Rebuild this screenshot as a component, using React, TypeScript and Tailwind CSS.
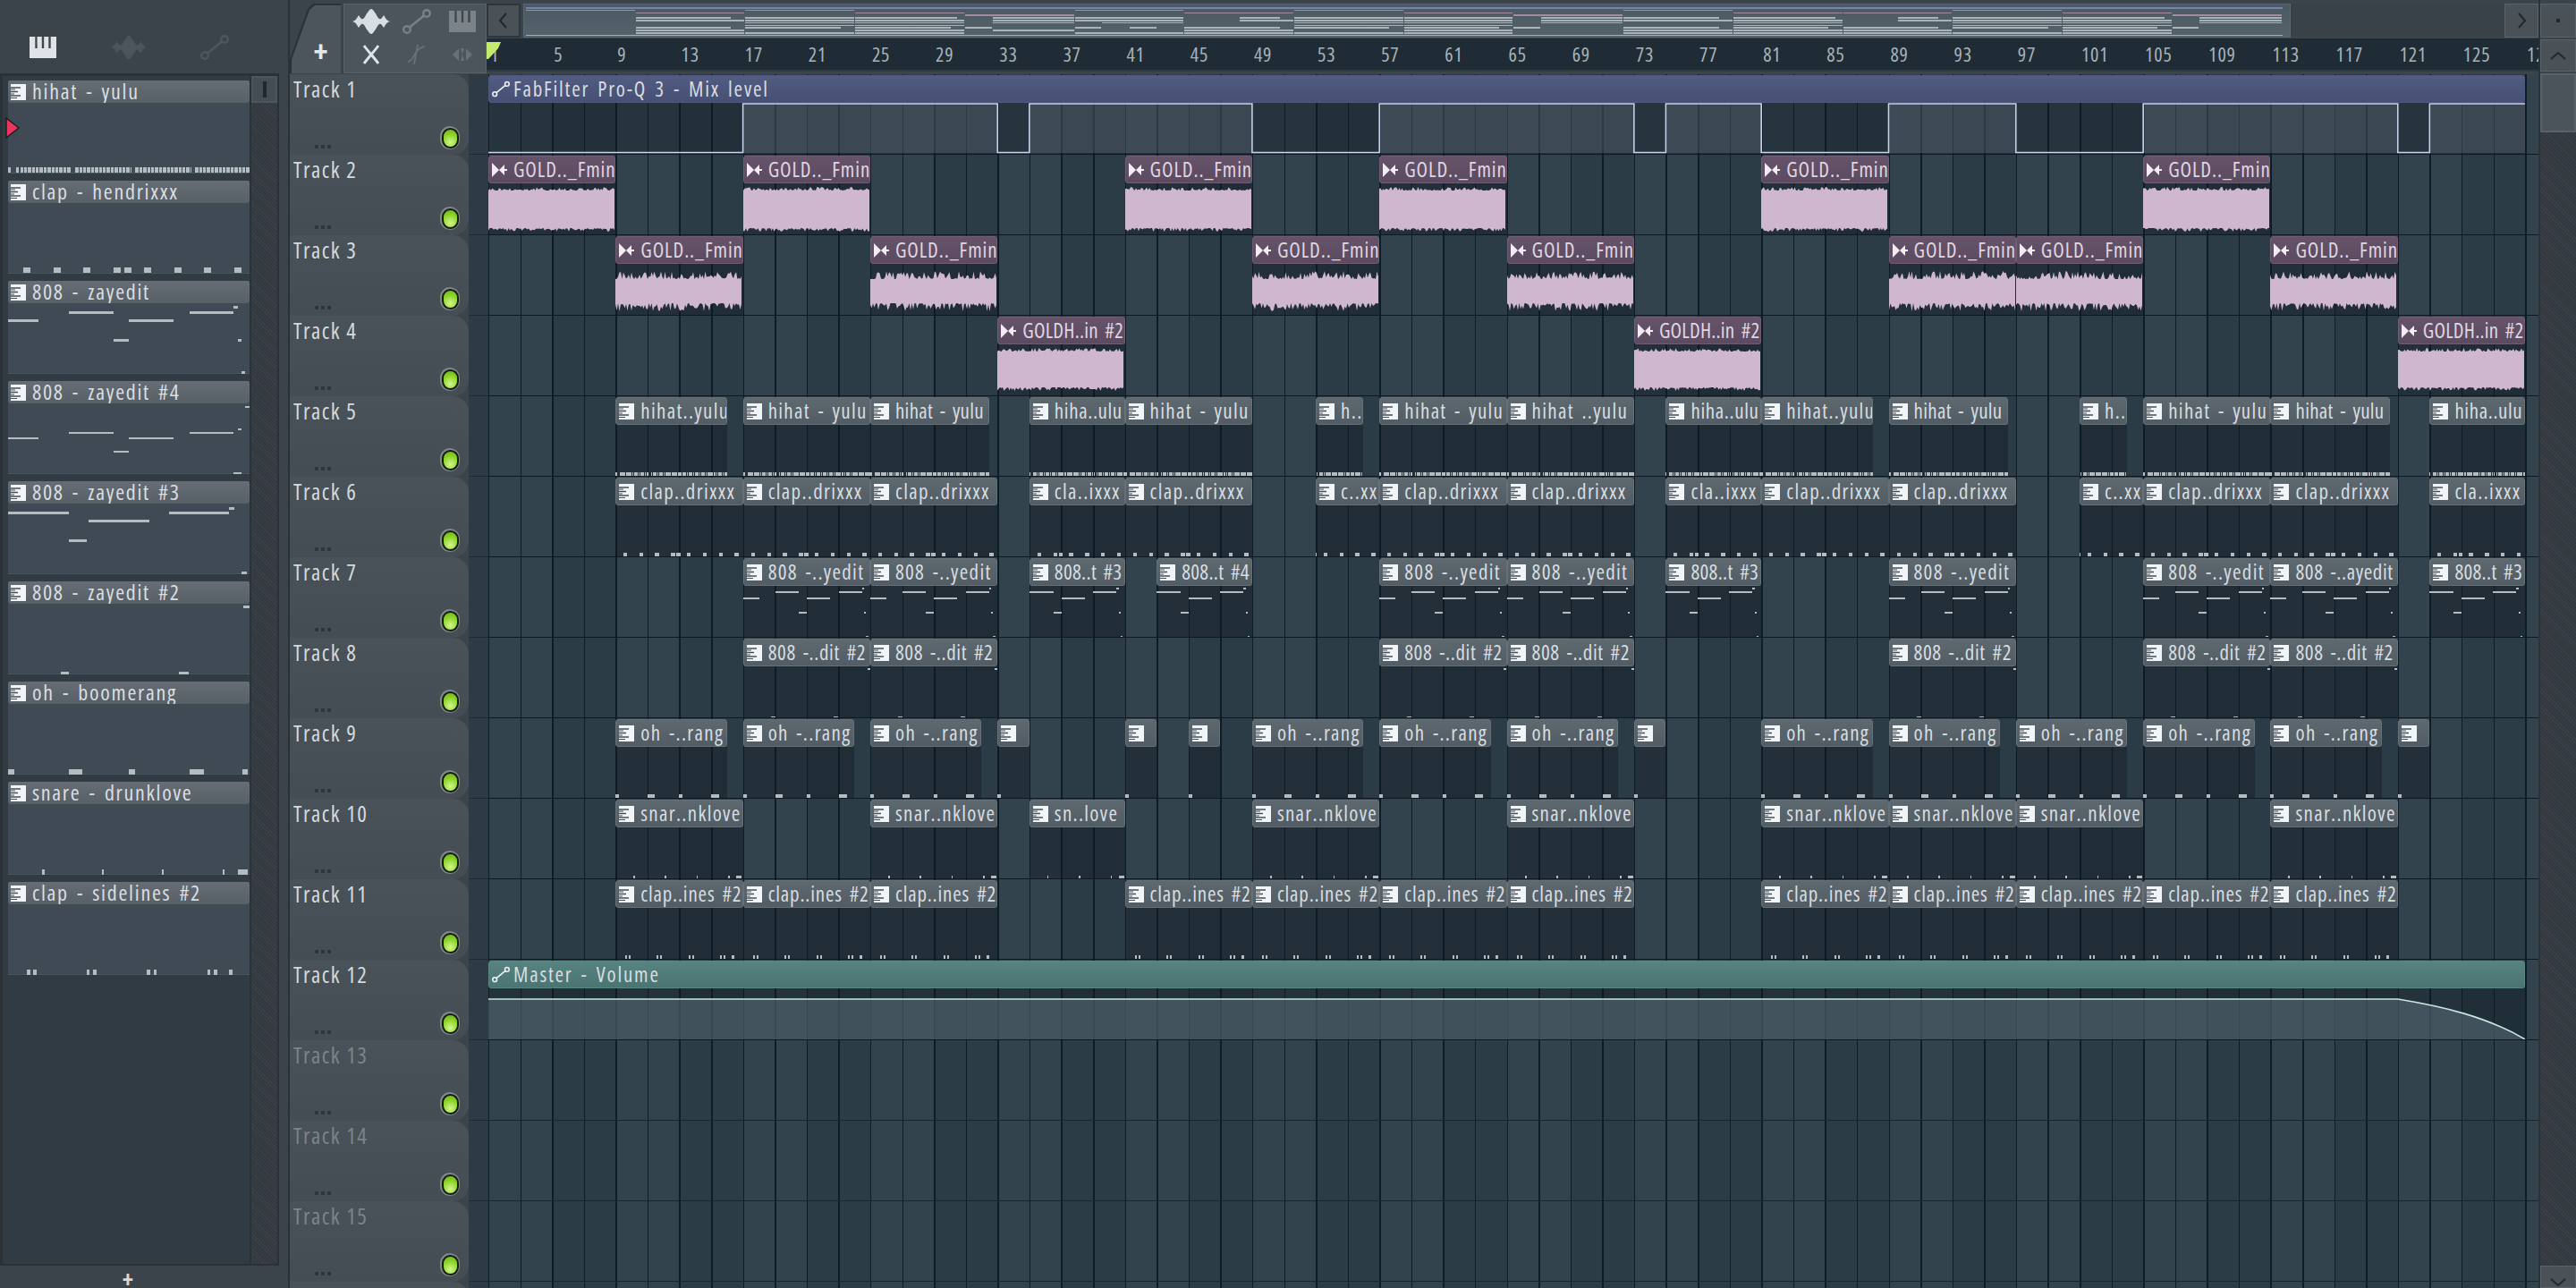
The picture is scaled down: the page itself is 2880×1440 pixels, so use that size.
import React from "react";

const BAR = 17.79;
const bx = (b: number) => (b - 1) * BAR;

type Note = [number, number, number, number];
const ticks = (segs: number[][], y: number, h: number): Note[] => {
  const out: Note[] = [];
  segs.forEach(([a, b]) => {
    for (let x = a; x < b; x += 0.13) out.push([x, Math.min(x + 0.1, b), y, h]);
  });
  return out;
};
const PAT: Record<string, Note[]> = {
  hihat: ticks([[0, 0.1], [0.27, 2.08], [2.23, 4.1], [4.22, 6.07], [6.2, 8]], 0.915, 6),
  clapH: [0.5, 1.5, 2.5, 3.5, 3.84, 4.5, 5.5, 6.5, 7.5].map((x) => [x, x + 0.24, 0.915, 6] as Note),
  z1: [[2, 3.5, 0.11, 3], [6, 7.47, 0.11, 3], [0, 1, 0.23, 3], [4, 5.48, 0.23, 3], [3.5, 4, 0.5, 3], [7.6, 7.72, 0.5, 3], [7.47, 7.6, 0.04, 3], [7.72, 7.85, 0.96, 3]],
  z4: [[2, 3.5, 0.4, 2], [6, 7.47, 0.4, 2], [0, 1, 0.48, 2], [4, 5.48, 0.48, 2], [3.5, 4, 0.67, 2], [7.6, 7.72, 0.35, 2], [7.85, 8, 0.04, 2], [7.47, 7.72, 0.97, 2]],
  z3: [[0, 2, 0.11, 3], [5.33, 7.33, 0.11, 3], [2.67, 4.67, 0.23, 3], [7.33, 7.5, 0.05, 3], [2, 2.6, 0.5, 3], [7.72, 7.9, 0.96, 3]],
  z2: [[1.75, 2, 0.96, 3], [5.65, 5.98, 0.96, 3], [7.8, 8, 0.03, 3]],
  oh: [[0, 0.22, 0.92, 6], [2, 2.47, 0.92, 6], [4, 4.2, 0.92, 6], [6, 6.5, 0.92, 6], [7.75, 7.95, 0.92, 6]],
  sn: [[1.14, 1.2, 0.93, 6], [3.1, 3.16, 0.93, 6], [5.1, 5.16, 0.93, 6], [7.1, 7.16, 0.93, 6], [7.6, 7.95, 0.93, 6]],
  cs: ([0.62, 2.6, 4.6, 6.6] as number[]).flatMap((x) => [[x, x + 0.11, 0.92, 6], [x + 0.22, x + 0.33, 0.92, 6]] as Note[]).concat([[7.32, 7.45, 0.92, 6]]),
};

const Notes = ({ pat, w, h, scale, off = 0, factor = 1 }: { pat: Note[]; w: number; h: number; scale: number; off?: number; factor?: number }) => (
  <svg width={w} height={h} viewBox={`0 0 ${w} ${h}`} shapeRendering="crispEdges" className="block">
    {pat.map(([a, b, y, nh], i) => (
      <rect key={i} x={(a - off) * scale} y={y * h} width={Math.max(1.5, (b - a) * scale)} height={Math.max(1.5, nh * factor)} fill="#b4bcc2" />
    ))}
  </svg>
);

const PianoIcon = ({ c = "#dfe3e6" }: { c?: string }) => (
  <svg width="30" height="24" viewBox="0 0 30 24">
    <path d="M0 0H30V24H0Z" fill={c} />
    <path d="M7.5 0V13M15 0V13M22.5 0V13" stroke="#3e464d" strokeWidth="2.4" />
    <path d="M9 0V8M17 0V8" stroke={c} strokeWidth="0.8" opacity="0.6" />
  </svg>
);
const WaveIcon = ({ c = "#d9dee2", w = 42, h = 28 }: { c?: string; w?: number; h?: number }) => (
  <svg width={w} height={h} viewBox="0 0 42 28">
    <path d="M0 14C4 13 5 10 7 7C9 10 10 12 12 11C14 10 15 6 17 4C18 2 20 0 21 0C22 0 24 2 25 4C27 6 28 10 30 11C32 12 33 10 35 7C37 10 38 13 42 14C38 15 37 18 35 21C33 18 32 16 30 17C28 18 27 22 25 24C24 26 22 28 21 28C20 28 18 26 17 24C15 22 14 18 12 17C10 16 9 18 7 21C5 18 4 15 0 14Z" fill={c} />
  </svg>
);
const AutoIcon = ({ c = "#6f777e", w = 32, h = 28, sw = 2.4 }: { c?: string; w?: number; h?: number; sw?: number }) => (
  <svg width={w} height={h} viewBox="0 0 32 28" fill="none" stroke={c} strokeWidth={sw} className="shrink-0">
    <circle cx="5" cy="23" r="3.8" />
    <circle cx="27" cy="5" r="3.8" />
    <path d="M8 20.5L24 7.5" />
  </svg>
);
const PatIcon = () => (
  <svg width="17" height="18" viewBox="0 0 17 18" className="shrink-0">
    <path d="M0 0H17V18H0Z" fill="#f2f5f7" />
    <path d="M0 4H11M0 8.5H8M0 13H11" stroke="#46505a" strokeWidth="1.4" />
    <path d="M0 6H5M0 11H4M0 15.5H7" stroke="#46505a" strokeWidth="1" />
  </svg>
);
const AudioIcon = () => (
  <svg width="17" height="16" viewBox="0 0 17 16" className="shrink-0">
    <path d="M0 0L8 8L0 16ZM8 8L14 2V7H17V9H14V14Z" fill="#f4ecf4" />
  </svg>
);

const rnd = (seed: number) => {
  let s = seed;
  return () => {
    s = (s * 9301 + 49297) % 233280;
    return s / 233280;
  };
};
const Wave = ({ w, h, seed, jag }: { w: number; h: number; seed: number; jag: number }) => {
  const r = rnd(seed);
  const top: string[] = [];
  const bot: string[] = [];
  for (let x = 0; x <= w; x += 1.5) {
    const a = r();
    const b = r();
    top.push(`${x} ${(jag - a * a * jag).toFixed(1)}`);
    bot.push(`${x} ${(h - jag + b * b * jag).toFixed(1)}`);
  }
  return (
    <svg width={w} height={h} viewBox={`0 0 ${w} ${h}`} className="block">
      <path d={`M${top.join("L")}L${bot.reverse().join("L")}Z`} fill="#cfb7cf" />
    </svg>
  );
};

type Clip = [number, number, string?, number?];
const g = (list: number[], name: string): Clip[] => list.map((s) => [s, s + 8, name] as Clip);

const TRACKS: { pat?: string; clips: Clip[]; kind?: string; wave?: [number, number, number] }[] = [
  { kind: "auto1", clips: [[1, 129, "FabFilter Pro-Q 3 - Mix level"]] },
  { kind: "audio", wave: [4, 50, 4], clips: g([1, 17, 41, 57, 81, 105], "GOLD.._Fmin") },
  { kind: "audio", wave: [8, 45, 9], clips: g([9, 25, 49, 65, 89, 97, 113], "GOLD.._Fmin") },
  { kind: "audio", wave: [4, 48, 4], clips: g([33, 73, 121], "GOLDH..in #2") },
  {
    pat: "hihat",
    clips: [[9, 16, "hihat..yulu"], [17, 25, "hihat - yulu"], [25, 32.5, "hihat - yulu"], [35, 41, "hiha..ulu", 2], [41, 49, "hihat - yulu"], [53, 56, "h..", 4], [57, 65, "hihat - yulu"], [65, 73, "hihat ..yulu"], [75, 81, "hiha..ulu", 2], [81, 88, "hihat..yulu"], [89, 96.5, "hihat - yulu"], [101, 104, "h..", 4], [105, 113, "hihat - yulu"], [113, 120.5, "hihat - yulu"], [123, 129, "hiha..ulu", 2]],
  },
  {
    pat: "clapH",
    clips: [[9, 17, "clap..drixxx"], [17, 25, "clap..drixxx"], [25, 33, "clap..drixxx"], [35, 41, "cla..ixxx", 2], [41, 49, "clap..drixxx"], [53, 57, "c..xx", 4], [57, 65, "clap..drixxx"], [65, 73, "clap..drixxx"], [75, 81, "cla..ixxx", 2], [81, 89, "clap..drixxx"], [89, 97, "clap..drixxx"], [101, 105, "c..xx", 4], [105, 113, "clap..drixxx"], [113, 121, "clap..drixxx"], [123, 129, "cla..ixxx", 2]],
  },
  {
    pat: "z1",
    clips: [[17, 25, "808 -..yedit"], [25, 33, "808 -..yedit"], [35, 41, "808..t #3", 2], [43, 49, "808..t #4", 2], [57, 65, "808 -..yedit"], [65, 73, "808 -..yedit"], [75, 81, "808..t #3", 2], [89, 97, "808 -..yedit"], [105, 113, "808 -..yedit"], [113, 121, "808 -..ayedit"], [123, 129, "808..t #3", 2]],
  },
  { pat: "z2", clips: g([17, 25, 57, 65, 89, 105, 113], "808 -..dit #2") },
  {
    pat: "oh",
    clips: [[9, 16, "oh -..rang"], [17, 24, "oh -..rang"], [25, 32, "oh -..rang"], [33, 35, ""], [41, 43, ""], [45, 47, ""], [49, 56, "oh -..rang"], [57, 64, "oh -..rang"], [65, 72, "oh -..rang"], [73, 75, ""], [81, 88, "oh -..rang"], [89, 96, "oh -..rang"], [97, 104, "oh -..rang"], [105, 112, "oh -..rang"], [113, 120, "oh -..rang"], [121, 123, ""]],
  },
  {
    pat: "sn",
    clips: [[9, 17, "snar..nklove"], [25, 33, "snar..nklove"], [35, 41, "sn..love", 2], [49, 57, "snar..nklove"], [65, 73, "snar..nklove"], [81, 89, "snar..nklove"], [89, 97, "snar..nklove"], [97, 105, "snar..nklove"], [113, 121, "snar..nklove"]],
  },
  { pat: "cs", clips: g([9, 17, 25, 41, 49, 57, 65, 81, 89, 97, 105, 113], "clap..ines #2") },
  { kind: "auto12", clips: [[1, 129, "Master - Volume"]] },
  { clips: [] },
  { clips: [] },
  { clips: [] },
  { clips: [] },
];

const PICKER: [string, string][] = [
  ["hihat - yulu", "hihat"],
  ["clap - hendrixxx", "clapH"],
  ["808 - zayedit", "z1"],
  ["808 - zayedit #4", "z4"],
  ["808 - zayedit #3", "z3"],
  ["808 - zayedit #2", "z2"],
  ["oh - boomerang", "oh"],
  ["snare - drunklove", "sn"],
  ["clap - sidelines #2", "cs"],
];

const HIGH: [number, number][] = [[17, 33], [35, 49], [57, 73], [75, 81], [89, 97], [105, 121], [123, 129]];

const Auto1Body = () => {
  const w = bx(129);
  let pts = "0,55.5";
  HIGH.forEach(([a, b]) => {
    const end = b === 129 ? w : bx(b);
    pts += ` ${bx(a)},55.5 ${bx(a)},1 ${end},1 ${end},${end === w ? 1 : 55.5}`;
  });
  return (
    <svg width={w} height="57" viewBox={`0 0 ${w} 57`} className="block">
      <rect width={w} height="57" fill="#101a22" fillOpacity="0.35" />
      {HIGH.map(([a, b]) => (
        <rect key={a} x={bx(a)} y="1" width={bx(b) - bx(a)} height="55" fill="#7c8a9c" fillOpacity="0.28" />
      ))}
      <polyline points={pts} fill="none" stroke="#c9d3ea" strokeWidth="1.6" />
    </svg>
  );
};

const Auto12Body = () => {
  const w = bx(129);
  const x0 = bx(121);
  const line = `M0 12H${x0}C${x0 + 50} 20 ${x0 + 100} 32 ${w} 57`;
  return (
    <svg width={w} height="58" viewBox={`0 0 ${w} 58`} className="block">
      <rect width={w} height="58" fill="#101a22" fillOpacity="0.4" />
      <path d={`${line}V58H0Z`} fill="#5c6f78" fillOpacity="0.55" />
      <path d={line} fill="none" stroke="#c6e6e2" strokeWidth="1.6" />
    </svg>
  );
};

const trackingFor = (name: string | undefined, w: number, auto: boolean) => {
  if (auto) return "tracking-[1.8px]";
  if (name === "GOLD.._Fmin") return "tracking-[0.9px]";
  if (name === "GOLDH..in #2") return "tracking-[0.2px]";
  if (name === "clap..ines #2") return "tracking-[0.8px]";
  if (name === "808 -..dit #2") return "tracking-[0.6px]";
  if (name === "808 -..ayedit") return "tracking-[0.6px]";
  if (name === "808..t #3" || name === "808..t #4") return "tracking-[0.3px]";
  if (name === "hiha..ulu") return "tracking-[0.6px]";
  if (name === "hihat - yulu" && w < 140) return "tracking-[0.3px]";
  return "tracking-[1.3px]";
};

const ClipView = ({ c, t, i }: { c: Clip; t: (typeof TRACKS)[number]; i: number }) => {
  const [s, e, name, off] = c;
  const w = bx(e) - bx(s);
  const isAudio = t.kind === "audio";
  const auto1 = t.kind === "auto1";
  const auto12 = t.kind === "auto12";
  const title = isAudio
    ? "bg-gradient-to-b from-[#66536a] to-[#5b4a60] border-[#6f5d73]"
    : auto1
    ? "bg-gradient-to-b from-[#525c82] to-[#465075] border-[#4f5980]"
    : auto12
    ? "bg-gradient-to-b from-[#578380] to-[#4a7472] border-[#5a8683]"
    : "bg-gradient-to-b from-[#5e686f] to-[#525c64] border-[#667078]";
  const track = trackingFor(name, w, auto1 || auto12);
  return (
    <div className="absolute top-[1px] bottom-0 flex flex-col overflow-hidden" style={{ left: bx(s), width: w }}>
      <div className={`h-[31px] shrink-0 flex items-center gap-[7px] pl-[3px] rounded-[3px] border overflow-hidden whitespace-nowrap ${title}`}>
        {isAudio ? <AudioIcon /> : auto1 || auto12 ? <AutoIcon c="#eef1f4" w={20} h={19} sw={2.6} /> : <PatIcon />}
        <span className={`${isAudio ? "text-[#e0d6e0]" : "text-[#d7dde0]"} text-[23px] ${track} [word-spacing:3px] leading-none ${auto1 || auto12 ? "-ml-[3px]" : ""}`}>{name}</span>
      </div>
      <div className={`flex-1 overflow-hidden ${auto1 || auto12 ? "" : "bg-[#111b24]/45"}`}>
        {auto1 && <Auto1Body />}
        {auto12 && <Auto12Body />}
        {isAudio && t.wave && (
          <div style={{ marginTop: t.wave[0] }}>
            <Wave w={w} h={t.wave[1]} seed={i * 37 + s * 11} jag={t.wave[2]} />
          </div>
        )}
        {t.pat && <Notes pat={PAT[t.pat]} w={w} h={58} scale={BAR} off={off ?? 0} factor={0.66} />}
      </div>
    </div>
  );
};

const TrackRow = ({ t, i }: { t: (typeof TRACKS)[number]; i: number }) => (
  <div className="flex h-[90px] shrink-0">
    <div className="relative w-[200px] shrink-0 rounded-r-[18px] bg-gradient-to-b from-[#4a5259] to-[#454d54]">
      <div className={`pl-[4px] pt-[1px] text-[25px] leading-[30px] tracking-[1.5px] ${i < 12 ? "text-[#d5dadd]" : "text-[#7c848a]"}`}>
        Track {i + 1}
      </div>
      <div className="absolute left-[28px] top-[79px] flex gap-[3px]">
        <span className="size-[4px] bg-[#2e353b]" />
        <span className="size-[4px] bg-[#2e353b]" />
        <span className="size-[4px] bg-[#2e353b]" />
      </div>
      <div className="absolute left-[168px] top-[58px] w-[22px] h-[26px] rounded-full bg-[#7f878c] flex items-center justify-center">
        <div className="w-[19px] h-[23px] rounded-full bg-[#12200a] flex items-center justify-center">
          <div className="w-[15px] h-[19px] rounded-full bg-[radial-gradient(circle_at_50%_75%,#d2f58e,#8ed52a_55%,#6caf18)]" />
        </div>
      </div>
    </div>
    <div className="w-[22px] shrink-0 bg-[#2e3b44] border-b border-[#1d2a33]" />
    <div className={`relative flex-1 border-b ${i >= 12 ? "border-[#182630]" : "border-[#0d1a23]"} bg-[repeating-linear-gradient(90deg,#0e1c26_0,#0e1c26_1.5px,transparent_1.5px,transparent_35.58px),repeating-linear-gradient(90deg,#32434e_0,#32434e_71.16px,#2c3c47_71.16px,#2c3c47_142.32px)]`}>
      {t.clips.map((c) => (
        <ClipView key={c[0]} c={c} t={t} i={i} />
      ))}
    </div>
  </div>
);

const OV = 15.34;
const ovColor = (i: number) => (i === 0 ? "#7683ad" : i < 4 ? "#a58aa4" : i === 11 ? "#74c9b8" : "#a9b3b8");
const Overview = () => (
  <svg width="1964" height="34" viewBox="0 0 1964 34" shapeRendering="crispEdges" className="block">
    {TRACKS.flatMap((t, i) =>
      t.clips.map((c) => (
        <rect key={`${i}-${c[0]}`} x={(c[0] - 1) * OV} y={i * 2.8} width={(c[1] - c[0]) * OV - (i > 0 && i < 11 ? 1 : 0)} height={1.6} fill={ovColor(i)} />
      ))
    )}
  </svg>
);

const Chevron = ({ d }: { d: string }) => (
  <svg width="20" height="24" viewBox="0 0 20 24" fill="none" stroke="#20272d" strokeWidth="2">
    <path d={d} />
  </svg>
);

const hatch = "bg-[repeating-linear-gradient(45deg,#3b4148_0,#3b4148_1px,#33393f_1px,#33393f_3px)]";

export default function App() {
  const nums: number[] = [];
  for (let n = 1; n <= 129; n += 4) nums.push(n);
  return (
    <div className="flex h-[1440px] w-[2880px] overflow-hidden bg-[#3c444b] font-['Open_Sans','Liberation_Sans',sans-serif] [font-stretch:75%]">
      {/* left picker */}
      <aside className="flex w-[324px] shrink-0 flex-col border-r-2 border-[#2a3238]">
        <div className="flex h-[82px] shrink-0 items-center pt-[24px]">
          <div className="ml-[33px]"><PianoIcon /></div>
          <div className="ml-[61px] opacity-90"><WaveIcon c="#4f575e" w={40} h={28} /></div>
          <div className="ml-[60px]"><AutoIcon c="#4f575e" /></div>
        </div>
        <div className="flex w-[312px] flex-1 min-h-0 border-[3px] border-l-[3px] border-r-[2px] border-b-[2px] border-[#2a3238] bg-[#303b43]">
          <div className="relative w-[276px] overflow-hidden">
            <div className="absolute left-[3px] top-[46px] z-10">
              <svg width="16" height="24" viewBox="0 0 16 24">
                <path d="M1 1L15 12L1 23Z" fill="#e8365f" stroke="#1a1a1f" strokeWidth="1.4" />
              </svg>
            </div>
            {PICKER.map(([name, key], i) => (
              <div key={name} className={`ml-[6px] flex w-[270px] flex-col ${i === 0 ? "mt-[5px]" : "mt-[8px]"}`}>
                <div className="flex h-[25px] items-center gap-[7px] rounded-[2px] bg-gradient-to-b from-[#666d74] to-[#575f67] pl-[3px]">
                  <PatIcon />
                  <span className="pb-[2px] text-[24px] leading-none tracking-[1.7px] [word-spacing:3px] text-[#d9dee1]">{name}</span>
                </div>
                <div className="h-[79px] bg-[#3f4a54] border-b border-[#4a555e]">
                  <Notes pat={PAT[key]} w={270} h={79} scale={33.75} />
                </div>
              </div>
            ))}
          </div>
          <div className="flex w-[31px] flex-col border-l-2 border-[#2a3238]">
            <div className="flex h-[30px] shrink-0 items-center justify-center border-2 border-[#4e565d] bg-[#464e55]">
              <div className="h-[18px] w-[4px] bg-[#20272d]" />
            </div>
            <div className={`flex-1 ${hatch}`} />
          </div>
        </div>
        <div className="flex h-[25px] shrink-0 items-end justify-center pr-[36px]">
          <span className="text-[26px] font-bold leading-[20px] text-[#d4d9dc]">+</span>
        </div>
      </aside>

      {/* centre */}
      <main className="flex min-w-0 flex-1 flex-col">
        <div className="flex h-[83px] shrink-0 pt-[4px]">
          <div className="flex h-[78px] w-[220px] shrink-0 gap-[3px]">
            <div className="w-[57px] shrink-0 bg-[#2a3238] [clip-path:polygon(0_100%,0_80%,20px_6px,26px_0,100%_0,100%_100%)]">
              <div className="flex size-full items-end justify-center pb-[8px] pl-[12px] bg-[#4d555c] [clip-path:polygon(2px_100%,2px_80%,22px_7px,28px_2px,100%_2px,100%_100%)]">
                <span className="text-[34px] font-bold leading-[34px] text-[#e5e8ea]">+</span>
              </div>
            </div>
            <div className="grid flex-1 grid-cols-3 grid-rows-2 place-items-center border border-[#5a6268] bg-[#4d555c] pb-[2px] pl-[4px]">
              <WaveIcon />
              <AutoIcon c="#798187" w={32} h={30} />
              <PianoIcon c="#7b8389" />
              <svg width="22" height="22" viewBox="0 0 22 22" fill="none" stroke="#dfe3e6" strokeWidth="3">
                <path d="M3 1C8 8 14 14 19 21M19 1C14 8 8 14 3 21" />
              </svg>
              <svg width="22" height="24" viewBox="0 0 22 24" fill="none" stroke="#697178" strokeWidth="1.8">
                <path d="M1 20C8 20 8 4 20 3M8 23L12 1" />
              </svg>
              <svg width="22" height="18" viewBox="0 0 22 18" fill="#697178">
                <path d="M0 9L7 2V16ZM22 9L15 2V16ZM9 2L13 2L11 9L13 16H9L11 9Z" />
              </svg>
            </div>
          </div>
          <div className="flex min-w-0 flex-1 flex-col">
            <div className="flex h-[38px] shrink-0">
              <div className="flex w-[38px] shrink-0 items-center justify-center border-2 border-[#2e363c] bg-[#4a5258]">
                <Chevron d="M13 4L6 12L13 20" />
              </div>
              <div className="ml-[3px] w-[1976px] shrink-0 border border-[#5b666e] bg-gradient-to-b from-[#4b5962] to-[#53626b] pl-[2px] pt-[3px]">
                <Overview />
              </div>
              <div className="flex-1 bg-[#3a4249]" />
              <div className="flex w-[38px] shrink-0 items-center justify-center border border-[#5b636a] bg-[#4a5258]">
                <Chevron d="M7 4L14 12L7 20" />
              </div>
            </div>
            <div className="mt-[1px] flex h-[37px] shrink-0 items-center justify-center overflow-hidden border-b-2 border-[#2f3b43] bg-[#1f2c35]">
              <div className="relative flex h-full w-full items-center overflow-hidden pb-[2px]">
                {nums.map((n) => (
                  <span key={n} className="w-[71.16px] shrink-0 pl-[4px] text-[22px] leading-none tracking-[0.8px] text-[#a8b3b9]">
                    {n}
                  </span>
                ))}
                <svg width="17" height="19" viewBox="0 0 17 19" className="absolute left-0 top-[4px]">
                  <path d="M0 0H16L13 7L2 19H0Z" fill="#c6ea70" />
                </svg>
              </div>
            </div>
          </div>
        </div>
        <div className="flex min-h-0 flex-1 flex-col overflow-hidden">
          {TRACKS.map((t, i) => (
            <TrackRow key={i} t={t} i={i} />
          ))}
        </div>
      </main>

      {/* right scrollbar */}
      <aside className="flex w-[42px] shrink-0 flex-col gap-[2px] border-l-2 border-[#2a3238] pt-[4px]">
        <div className="flex h-[38px] shrink-0 items-center justify-center border border-[#5b636a] bg-[#4a5258]">
          <span className="size-[4px] bg-[#20272d]" />
        </div>
        <div className="flex h-[36px] shrink-0 items-center justify-center border border-[#5b636a] bg-[#4a5258]">
          <Chevron d="M2 16L10 9L18 16" />
        </div>
        <div className="h-[66px] shrink-0 border-2 border-[#59616a] bg-[#4c545b]" />
        <div className={`flex-1 -mt-[2px] ${hatch}`} />
        <div className="flex h-[25px] shrink-0 -mt-[2px] items-start justify-center border border-[#5b636a] bg-[#4a5258] pt-[12px]">
          <Chevron d="M2 2L10 9L18 2" />
        </div>
      </aside>
    </div>
  );
}
